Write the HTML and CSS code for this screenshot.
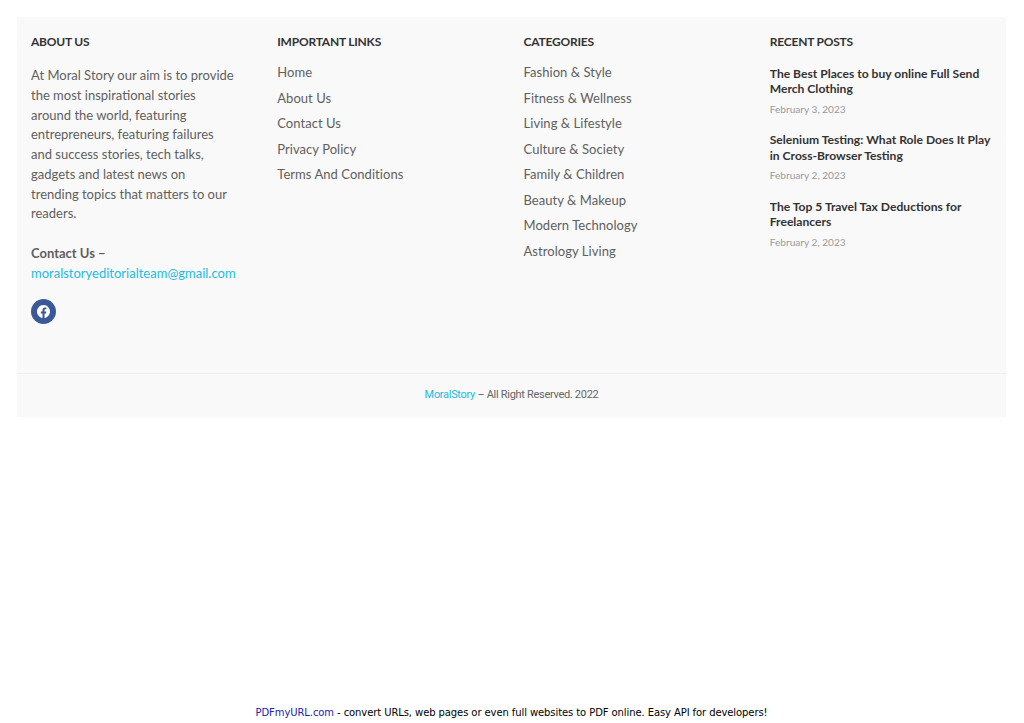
FILE: index.html
```html
<!DOCTYPE html>
<html lang="en">
<head>
<meta charset="utf-8">
<title>Moral Story</title>
<link rel="stylesheet" href="styles.css">
</head>
<body>
<div class="page">
<footer class="footer">
  <div class="columns">
    <section class="col">
      <h2 class="heading">ABOUT US</h2>
      <p class="about">At Moral Story our aim is to provide<br>the most inspirational stories<br>around the world, featuring<br>entrepreneurs, featuring failures<br>and success stories, tech talks,<br>gadgets and latest news on<br>trending topics that matters to our<br>readers.</p>
      <p class="contact"><strong>Contact Us –</strong><br><a class="accent" href="#">moralstoryeditorialteam@gmail.com</a></p>
      <a class="social" href="#" aria-label="Facebook">
        <svg viewBox="0 0 24 24" width="13" height="13"><path fill="#fff" d="M24 12.07C24 5.4 18.63 0 12 0S0 5.4 0 12.07c0 6.03 4.39 11.02 10.13 11.93v-8.44H7.08v-3.49h3.05V9.41c0-3.02 1.79-4.69 4.53-4.69 1.31 0 2.68.24 2.68.24v2.97h-1.51c-1.49 0-1.96.93-1.96 1.89v2.25h3.33l-.53 3.49h-2.8V24C19.61 23.09 24 18.1 24 12.07z"/></svg>
      </a>
    </section>
    <section class="col">
      <h2 class="heading">IMPORTANT LINKS</h2>
      <ul class="links">
        <li>Home</li><li>About Us</li><li>Contact Us</li><li>Privacy Policy</li><li>Terms And Conditions</li>
      </ul>
    </section>
    <section class="col">
      <h2 class="heading">CATEGORIES</h2>
      <ul class="links">
        <li>Fashion &amp; Style</li><li>Fitness &amp; Wellness</li><li>Living &amp; Lifestyle</li><li>Culture &amp; Society</li><li>Family &amp; Children</li><li>Beauty &amp; Makeup</li><li>Modern Technology</li><li>Astrology Living</li>
      </ul>
    </section>
    <section class="col">
      <h2 class="heading">RECENT POSTS</h2>
      <article class="post"><h3 class="post-title">The Best Places to buy online Full Send<br>Merch Clothing</h3><div class="post-date">February 3, 2023</div></article>
      <article class="post"><h3 class="post-title">Selenium Testing: What Role Does It Play<br>in Cross-Browser Testing</h3><div class="post-date">February 2, 2023</div></article>
      <article class="post"><h3 class="post-title">The Top 5 Travel Tax Deductions for<br>Freelancers</h3><div class="post-date">February 2, 2023</div></article>
    </section>
  </div>
  <div class="copyright"><a class="accent" href="#">MoralStory</a> – All Right Reserved. 2022</div>
</footer>
<div class="pdf-note"><a href="#">PDFmyURL.com</a> - convert URLs, web pages or even full websites to PDF online. Easy API for developers!</div>
</div>
</body>
</html>
```
FILE: styles.css
```css
* { box-sizing: border-box; }
html, body { margin: 0; padding: 0; background: #fff; }
.page { height: 723px; padding: 17px 18px 0 17px; display: flex; flex-direction: column; overflow: hidden; }
.footer { height: 400px; background: #f9f9f9; display: flex; flex-direction: column; font-family: "Lato", "Inter", sans-serif; color: #5f5f5f; }
.columns { height: 357px; display: grid; grid-template-columns: repeat(4, 246.25px); padding-left: 14px; border-bottom: 1px solid #eee; }
.col { padding-top: 17px; min-width: 0; }
.heading { margin: 0; font-size: 12px; line-height: 15px; font-weight: 700; color: #333; letter-spacing: -0.22px; }
.about { margin: 17.3px 0 0; font-size: 13px; line-height: 19.7px; }
.contact { margin: 20px 0 0; font-size: 13px; line-height: 19.7px; }
.contact strong { font-weight: 700; }
.accent { color: #22bbe0; text-decoration: none; }
.social { margin-top: 16px; width: 25px; height: 25px; border-radius: 50%; background: #3b5998; display: flex; align-items: center; justify-content: center; }
.links { list-style: none; margin: 11px 0 0; padding: 0; font-size: 13px; line-height: 25.5px; letter-spacing: 0.05px; }
.post { margin-bottom: 15.5px; }
.heading + .post { margin-top: 16.7px; }
.post-title { margin: 0; font-size: 12.1px; line-height: 15.5px; font-weight: 700; color: #333; }
.post-date { margin-top: 5px; font-size: 10.1px; line-height: 15px; color: #999; }
.copyright { flex: 1; text-align: center; line-height: 42px; font-family: "Roboto", sans-serif; font-size: 11px; letter-spacing: -0.3px; color: #666; }
.pdf-note { margin-top: auto; height: 20px; text-align: center; font-family: "DejaVu Sans", sans-serif; font-size: 10px; letter-spacing: -0.09px; line-height: 20px; color: #000; }
.pdf-note a { color: #2222aa; text-decoration: none; }
```
